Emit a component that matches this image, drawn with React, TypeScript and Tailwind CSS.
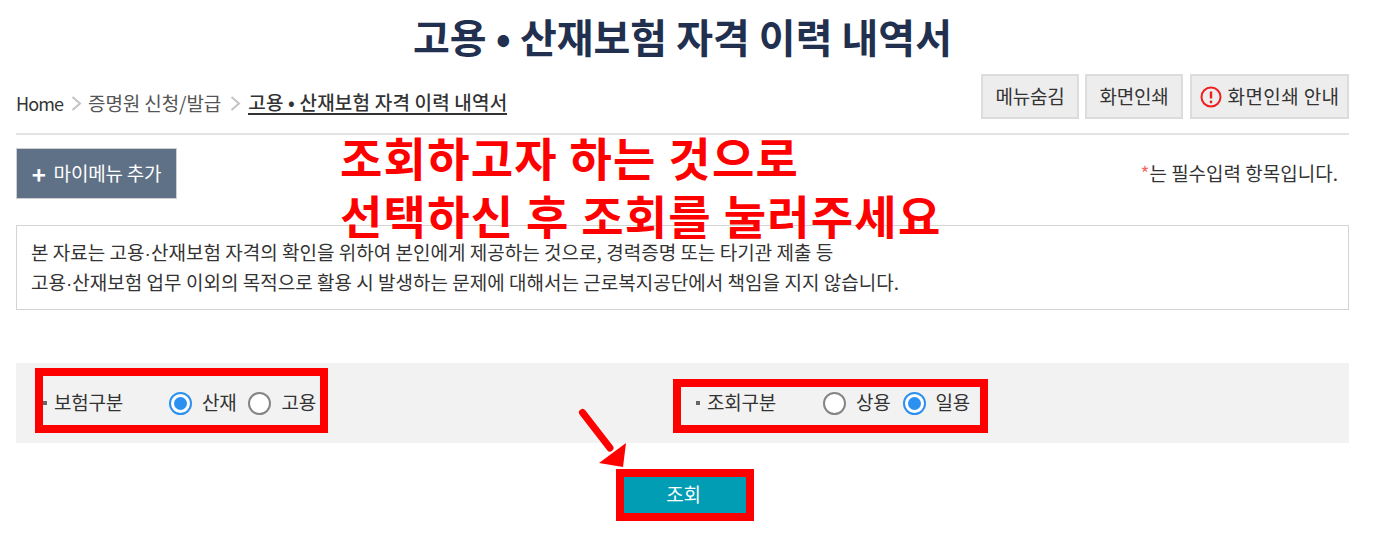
import React from "react";

const Radio = ({ on }: { on?: boolean }) => (
  <span className={`box-border flex h-[23px] w-[23px] shrink-0 items-center justify-center rounded-full border-2 bg-white ${on ? "border-[#2b90f0]" : "border-[#858585]"}`}>
    {on && <span className="h-[13px] w-[13px] rounded-full bg-[#2b90f0]" />}
  </span>
);

const TopBtn = ({ children, w }: { children: React.ReactNode; w: string }) => (
  <div className={`box-border flex h-[45px] items-center justify-center border-2 border-[#dcdcdc] bg-[#ededed] text-[19px] tracking-[-0.2px] text-[#333] ${w}`}>
    {children}
  </div>
);

const Chev = () => (
  <svg width="11" height="15" viewBox="0 0 11 15" className="shrink-0">
    <path d="M1.5 1 L9 7.5 L1.5 14" fill="none" stroke="#c4c4c4" strokeWidth="2" />
  </svg>
);

const Dot = () => <span className="font-['Liberation_Sans'] tracking-normal">·</span>;

export default function App() {
  return (
    <div
      className="relative h-[544px] w-[1389px] overflow-hidden bg-white pl-4 pr-10"
      style={{ fontFamily: '"Noto Sans CJK KR", "Noto Sans", sans-serif' }}
    >
      <h1 className="h-[74px] pt-[10px] text-center text-[40px] font-bold leading-[52px] text-[#22304f]">
        고용 • 산재보험 자격 이력 내역서
      </h1>

      <div className="flex h-[61px] items-start justify-between border-b-2 border-[#e4e4e4]">
        <div className="flex items-center pt-[16px] text-[19px] leading-[26px] text-[#555]">
          <span className="text-[18px] tracking-[-0.9px] text-[#333]">Home</span>
          <span className="ml-[8px] mr-[6px]"><Chev /></span>
          <span className="tracking-[-0.1px]">증명원 신청/발급</span>
          <span className="ml-[9px] mr-[7px]"><Chev /></span>
          <span className="border-b-2 border-[#333] font-medium leading-[22px] tracking-[0.2px] text-[#333]">고용 • 산재보험 자격 이력 내역서</span>
        </div>
        <div className="flex">
          <TopBtn w="w-[98px]">메뉴숨김</TopBtn>
          <div className="w-[6px]" />
          <TopBtn w="w-[98px]">화면인쇄</TopBtn>
          <div className="w-[7px]" />
          <TopBtn w="w-[159px] gap-[6px]">
            <svg width="22" height="22" viewBox="0 0 22 22">
              <circle cx="11" cy="11" r="9.5" fill="none" stroke="#f01f1f" strokeWidth="2" />
              <path d="M11 5.5 V12.5" stroke="#f01f1f" strokeWidth="2.4" />
              <circle cx="11" cy="16" r="1.4" fill="#f01f1f" />
            </svg>
            <span className="tracking-[0.4px]">화면인쇄 안내</span>
          </TopBtn>
        </div>
      </div>

      <div className="flex h-[90px] items-start justify-between pr-[11px] pt-[13px]">
        <div className="box-border flex h-[51px] w-[161px] items-center justify-center gap-[8px] border border-[#cfcfcf] bg-[#5f7186] text-[19px] tracking-[-0.2px] text-white">
          <span className="text-[24px] font-bold leading-none">+</span>
          <span>마이메뉴 추가</span>
        </div>
        <div className="pt-[12px] text-[19px] leading-[26px] text-[#333]">
          <span className="text-[#f06a6a]">*</span>는 필수입력 항목입니다.
        </div>
      </div>

      <div className="box-border h-[85px] border border-[#d4d4d4] px-[14px] py-[12px] text-[19px] leading-[28px] tracking-[0.02px] text-[#333]">
        <p>본 자료는 고용<Dot />산재보험 자격의 확인을 위하여 본인에게 제공하는 것으로, 경력증명 또는 타기관 제출 등</p>
        <p>고용<Dot />산재보험 업무 이외의 목적으로 활용 시 발생하는 문제에 대해서는 근로복지공단에서 책임을 지지 않습니다.</p>
      </div>

      <div className="mt-[53px] flex h-[80px] bg-[#f2f2f2] text-[19px] tracking-[-0.2px] text-[#333]">
        <div className="flex w-[664px] items-start pl-[27px] pt-[26px]">
          <span className="mt-[12px] h-[4px] w-[4px] bg-[#666]" />
          <span className="ml-[7px] w-[115px] leading-[26px]">보험구분</span>
          <span className="mt-[3px]"><Radio on /></span>
          <span className="ml-[10px] leading-[26px]">산재</span>
          <span className="ml-[11px] mt-[3px]"><Radio /></span>
          <span className="ml-[11px] leading-[26px]">고용</span>
        </div>
        <div className="flex items-start pl-[16px] pt-[26px]">
          <span className="mt-[12px] h-[4px] w-[4px] bg-[#666]" />
          <span className="ml-[7px] w-[116px] leading-[26px]">조회구분</span>
          <span className="mt-[3px]"><Radio /></span>
          <span className="ml-[10px] leading-[26px]">상용</span>
          <span className="ml-[12px] mt-[3px]"><Radio on /></span>
          <span className="ml-[10px] leading-[26px]">일용</span>
        </div>
      </div>

      <div className="ml-[608px] mt-[34px] flex h-[36px] w-[122px] items-center justify-center bg-[#009db4] pb-[2px] pr-[3px] text-[19px] tracking-[-0.2px] text-white">
        조회
      </div>

      {/* Red annotations drawn on top of the page */}
      <div className="absolute left-[340px] top-[127px] text-[46px] font-bold leading-[58px] tracking-[1.25px] text-[#ff0000]">
        <p>조회하고자 하는 것으로</p>
        <p>선택하신 후 조회를 눌러주세요</p>
      </div>
      <div className="absolute left-[35px] top-[368px] h-[65px] w-[293px] border-[8px] border-[#ff0000]" />
      <div className="absolute left-[673px] top-[379px] h-[54px] w-[315px] border-[8px] border-[#ff0000]" />
      <div className="absolute left-[616px] top-[469px] h-[52px] w-[138px] border-[8px] border-[#ff0000]" />
      <svg className="absolute left-[575px] top-[405px]" width="56" height="64" viewBox="0 0 56 64">
        <path d="M7.5 7.5 L35 43" stroke="#ff0000" strokeWidth="7" strokeLinecap="round" fill="none" />
        <path d="M51 38 L48 62 L24 58 Z" fill="#ff0000" />
      </svg>
    </div>
  );
}
